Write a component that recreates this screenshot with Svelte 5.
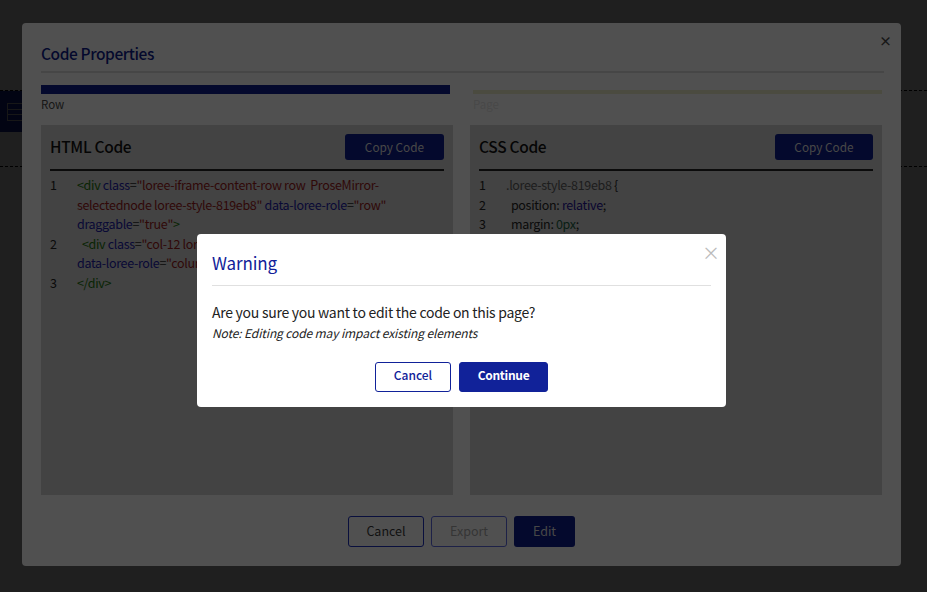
<script>
	const htmlLines = [
		{ n: 1, parts: [['tag', '<div '], ['attr', 'class'], ['', '='], ['str', '"loree-iframe-content-row row \u00a0ProseMirror-selectednode loree-style-819eb8"'], ['', ' '], ['attr', 'data-loree-role'], ['', '='], ['str', '"row"'], ['', ' '], ['attr', 'draggable'], ['', '='], ['str', '"true"'], ['tag', '>']] },
		{ n: 2, parts: [['', '\u00a0 '], ['tag', '<div '], ['attr', 'class'], ['', '='], ['str', '"col-12 loree-iframe-content-column loree-style"'], ['', ' '], ['attr', 'data-loree-role'], ['', '='], ['str', '"column"'], ['tag', '>']] },
		{ n: 3, parts: [['tag', '</div>']] }
	];

	const cssLines = [
		{ n: 1, parts: [['qual', '.loree-style-819eb8'], ['', ' {']] },
		{ n: 2, parts: [['', '\u00a0 position: '], ['atom', 'relative'], ['', ';']] },
		{ n: 3, parts: [['', '\u00a0 margin: '], ['num', '0px'], ['', ';']] },
		{ n: 4, parts: [['', '}']] }
	];

	const panels = [
		{ title: 'HTML Code', lines: htmlLines },
		{ title: 'CSS Code', lines: cssLines }
	];
</script>

<div class="page">
	<div class="guide">
		<div class="row-handle">
			<svg width="16" height="18" viewBox="0 0 16 18" fill="none" stroke="#b8b8b8" stroke-width="1">
				<rect x="0.5" y="0.5" width="15" height="17" />
				<path d="M0 6.5h16M0 11.5h16" />
			</svg>
		</div>
	</div>
</div>

<div class="backdrop">
	<section class="code-modal">
		<button class="close-dark" aria-label="Close">×</button>
		<h2 class="code-title">Code Properties</h2>
		<div class="steps">
			<div class="step">
				<div class="bar-slot"><div class="bar active"></div></div>
				<span class="step-label">Row</span>
			</div>
			<div class="step">
				<div class="bar-slot"><div class="bar"></div></div>
				<span class="step-label faint">Page</span>
			</div>
		</div>
		<div class="panels">
			{#each panels as panel}
				<div class="panel">
					<div class="panel-head">
						<h3>{panel.title}</h3>
						<button class="copy">Copy Code</button>
					</div>
					<div class="code">
						{#each panel.lines as line}
							<div class="line">
								<span class="num">{line.n}</span>
								<span class="text">{#each line.parts as part}<span class={part[0]}>{part[1]}</span>{/each}</span>
							</div>
						{/each}
					</div>
				</div>
			{/each}
		</div>
		<div class="code-actions">
			<button class="btn outline">Cancel</button>
			<button class="btn outline disabled">Export</button>
			<button class="btn solid edit">Edit</button>
		</div>
	</section>
</div>

<div class="backdrop top">
	<section class="warning">
		<button class="close-light" aria-label="Close">×</button>
		<h2>Warning</h2>
		<p class="ask">Are you sure you want to edit the code on this page?</p>
		<p class="note">Note: Editing code may impact existing elements</p>
		<div class="warning-actions">
			<button class="wbtn cancel">Cancel</button>
			<button class="wbtn continue">Continue</button>
		</div>
	</section>
</div>

<style>
	:global(body) {
		margin: 0;
		background: #fff;
		font-family: "Noto Sans CJK SC", "Noto Sans", sans-serif;
		overflow: hidden;
	}

	.page {
		height: 592px;
		padding-top: 90px;
		box-sizing: border-box;
	}

	.guide {
		height: 75px;
		border-top: 1px dashed #000;
		border-bottom: 1px dashed #000;
	}

	.row-handle {
		width: 40px;
		height: 41px;
		background: #112299;
		display: flex;
		align-items: center;
		padding-left: 7px;
		box-sizing: border-box;
	}

	.backdrop {
		position: fixed;
		inset: 0;
		background: rgba(0, 0, 0, 0.65);
		padding: 23px 26px 0 22px;
		box-sizing: border-box;
	}

	.backdrop.top {
		padding: 234px 0 0 197px;
	}

	.code-modal {
		position: relative;
		width: 879px;
		height: 543px;
		box-sizing: border-box;
		background: #e6e6e6;
		border-radius: 4px;
		padding: 18px 17px 0 19px;
		display: flex;
		flex-direction: column;
	}

	.code-title {
		margin: 0;
		height: 30px;
		border-bottom: 2px solid #c8c8c8;
		font-size: 15.5px;
		line-height: 24px;
		font-weight: 500;
		letter-spacing: -0.4px;
		color: #0c1a80;
	}

	.close-dark {
		position: absolute;
		top: 10px;
		right: 9px;
		border: 0;
		padding: 0;
		background: none;
		font: 700 13px/16px "Noto Sans CJK SC", sans-serif;
		color: #444;
	}

	.steps {
		display: flex;
		gap: 23px;
		margin-top: 12px;
		padding-right: 2px;
	}

	.step {
		width: 409px;
		display: flex;
		flex-direction: column;
	}

	.bar-slot {
		height: 9px;
		display: flex;
		align-items: flex-end;
	}

	.bar {
		height: 4px;
		width: 100%;
		background: #d8d6b8;
	}

	.bar.active {
		height: 9px;
		background: #0c1a80;
	}

	.step-label {
		font-size: 11.5px;
		line-height: 20px;
		color: #444;
	}

	.step-label.faint {
		color: #cfcfcf;
	}

	.panels {
		display: flex;
		gap: 17px;
		margin-top: 11px;
		padding-right: 2px;
	}

	.panel {
		width: 412px;
		height: 370px;
		box-sizing: border-box;
		background: #bfbfbf;
		padding: 9px 9px 0;
	}

	.panel-head {
		height: 35px;
		border-bottom: 2px solid #222;
		display: flex;
		justify-content: space-between;
		align-items: flex-start;
	}

	h3 {
		margin: 0;
		font-size: 15.5px;
		line-height: 25px;
		font-weight: 500;
		letter-spacing: -0.3px;
		color: #111;
	}

	.copy {
		height: 26px;
		width: 99px;
		padding: 0;
		border: 0;
		border-radius: 3px;
		background: #0c1a80;
		color: #ccc;
		font: 400 11.8px/26px "Noto Sans CJK SC", sans-serif;
	}

	.panel:last-child .copy {
		width: 98px;
	}

	.code {
		margin-top: 4px;
	}

	.line {
		display: grid;
		grid-template-columns: 27px 1fr;
		font-size: 12.5px;
		letter-spacing: -0.33px;
		line-height: 19.5px;
		color: #222;
	}

	.text {
		overflow-wrap: break-word;
	}

	.tag { color: #1a6a0a; }
	.attr { color: #1a1a99; white-space: nowrap; }
	.str { color: #8a1818; }
	.atom { color: #221188; }
	.num { color: #222; }
	.text .num { color: #1a5a3c; }
	.qual { color: #555; }

	.code-actions {
		display: flex;
		justify-content: center;
		gap: 7px;
		margin-top: 21px;
		padding-right: 2px;
	}

	.btn {
		height: 31px;
		box-sizing: border-box;
		border-radius: 3px;
		font: 400 12.5px/1 "Noto Sans CJK SC", sans-serif;
	}

	.outline {
		width: 76px;
		background: transparent;
		border: 1px solid #1a2bb0;
		color: #333;
	}

	.outline.disabled {
		border-color: #5560cc;
		color: #999;
	}

	.solid.edit {
		width: 61px;
		background: #0c1a80;
		border: 0;
		color: #ccc;
	}

	.warning {
		position: relative;
		width: 529px;
		height: 173px;
		box-sizing: border-box;
		padding: 15px;
		background: #fff;
		border-radius: 4px;
		color: #222;
	}

	.warning h2 {
		margin: 0;
		height: 36px;
		border-bottom: 1px solid #e0e0e0;
		font-size: 17px;
		line-height: 27px;
		font-weight: 400;
		letter-spacing: -0.1px;
		color: #112299;
	}

	.close-light {
		position: absolute;
		top: 8px;
		right: 6px;
		border: 0;
		padding: 0;
		background: none;
		font: 400 18px/20px "Noto Sans CJK SC", sans-serif;
		color: #bbb;
	}

	.ask {
		margin: 16px 0 0;
		font-size: 14px;
		letter-spacing: -0.27px;
		line-height: 20px;
	}

	.note {
		margin: 2px 0 0;
		font-size: 12px;
		letter-spacing: -0.12px;
		line-height: 18px;
		font-style: italic;
	}

	.warning-actions {
		display: flex;
		justify-content: center;
		gap: 8px;
		margin-top: 20px;
	}

	.wbtn {
		height: 30px;
		box-sizing: border-box;
		border-radius: 3px;
		border: 1px solid #112299;
		padding: 0 0 4px;
		font: 500 12px/1 "Noto Sans CJK SC", sans-serif;
	}

	.cancel {
		width: 76px;
		background: #fff;
		color: #112299;
	}

	.continue {
		width: 89px;
		background: #112299;
		color: #fff;
		font-weight: 700;
		letter-spacing: -0.3px;
	}
</style>
